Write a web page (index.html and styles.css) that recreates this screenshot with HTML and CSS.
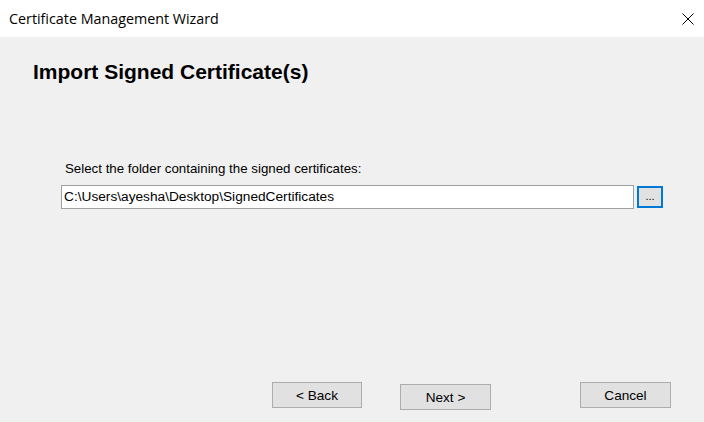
FILE: index.html
```html
<!DOCTYPE html>
<html>
<head>
<meta charset="utf-8">
<link rel="stylesheet" href="styles.css">
</head>
<body>
<div class="window">
  <div class="titlebar">
    <span class="title">Certificate Management Wizard</span>
    <span class="close"><svg width="12" height="12" viewBox="0 0 12 12"><path d="M0.5 0.5 L11.5 11.5 M11.5 0.5 L0.5 11.5" stroke="#000" stroke-width="1" fill="none"/></svg></span>
  </div>
  <div class="content">
    <h1 class="heading">Import Signed Certificate(s)</h1>
    <div class="field">
      <label class="label">Select the folder containing the signed certificates:</label>
      <div class="row">
        <div class="textbox">C:\Users\ayesha\Desktop\SignedCertificates</div>
        <div class="browse">...</div>
      </div>
    </div>
    <div class="footer">
      <div class="btn">&lt; Back</div>
      <div class="btn next">Next &gt;</div>
      <div class="btn cancel">Cancel</div>
    </div>
  </div>
</div>
</body>
</html>
```
FILE: styles.css
```css
html, body { margin: 0; padding: 0; }
body { width: 704px; height: 422px; overflow: hidden; background: #f0f0f0; }
.window { display: flex; flex-direction: column; width: 704px; height: 422px; }
.titlebar {
  height: 37px; background: #fff; display: flex; align-items: center;
  justify-content: space-between; padding: 0 9px 0 9px; box-sizing: border-box;
}
.title { font-family: "Open Sans", "Noto Sans", sans-serif; font-size: 14.3px; color: #000; }
.close { display: flex; width: 12px; height: 12px; margin-right: 1px; }
.content { flex: 1; background: #f0f0f0; display: flex; flex-direction: column; }
.heading {
  margin: 22px 0 0 33px; font-family: "Liberation Sans", Arial, sans-serif;
  font-weight: bold; font-size: 21px; line-height: 26px; color: #000;
}
.field { margin: 76px 0 0 61px; font-family: "Liberation Sans", Arial, sans-serif; }
.label { display: block; margin-left: 4px; color: #000; line-height: 16px; font-size: 13.3px; }
.row { display: flex; margin-top: 8px; align-items: flex-start; }
.textbox {
  width: 573px; height: 24px; box-sizing: border-box; background: #fff;
  border: 1px solid #a0a0a0; padding: 0 0 0 2px; line-height: 22px; color: #000;
  font-size: 13.7px;
}
.browse {
  width: 26px; height: 22px; box-sizing: border-box; margin: 1px 0 0 3px;
  border: 2px solid #0078d7; background: #e1e1e1; text-align: center;
  font-size: 11px; line-height: 16px; color: #000;
}
.footer { margin-top: auto; display: flex; padding: 0 33px 12px 272px; align-items: flex-start; }
.btn {
  width: 90px; height: 26px; box-sizing: border-box; border: 1px solid #adadad;
  background: #e1e1e1; font-family: "Liberation Sans", Arial, sans-serif; font-size: 13.6px;
  display: flex; align-items: center; justify-content: center; color: #000;
}
.next { margin-left: 38px; width: 91px; margin-top: 2px; }
.cancel { margin-left: auto; width: 91px; }
```
